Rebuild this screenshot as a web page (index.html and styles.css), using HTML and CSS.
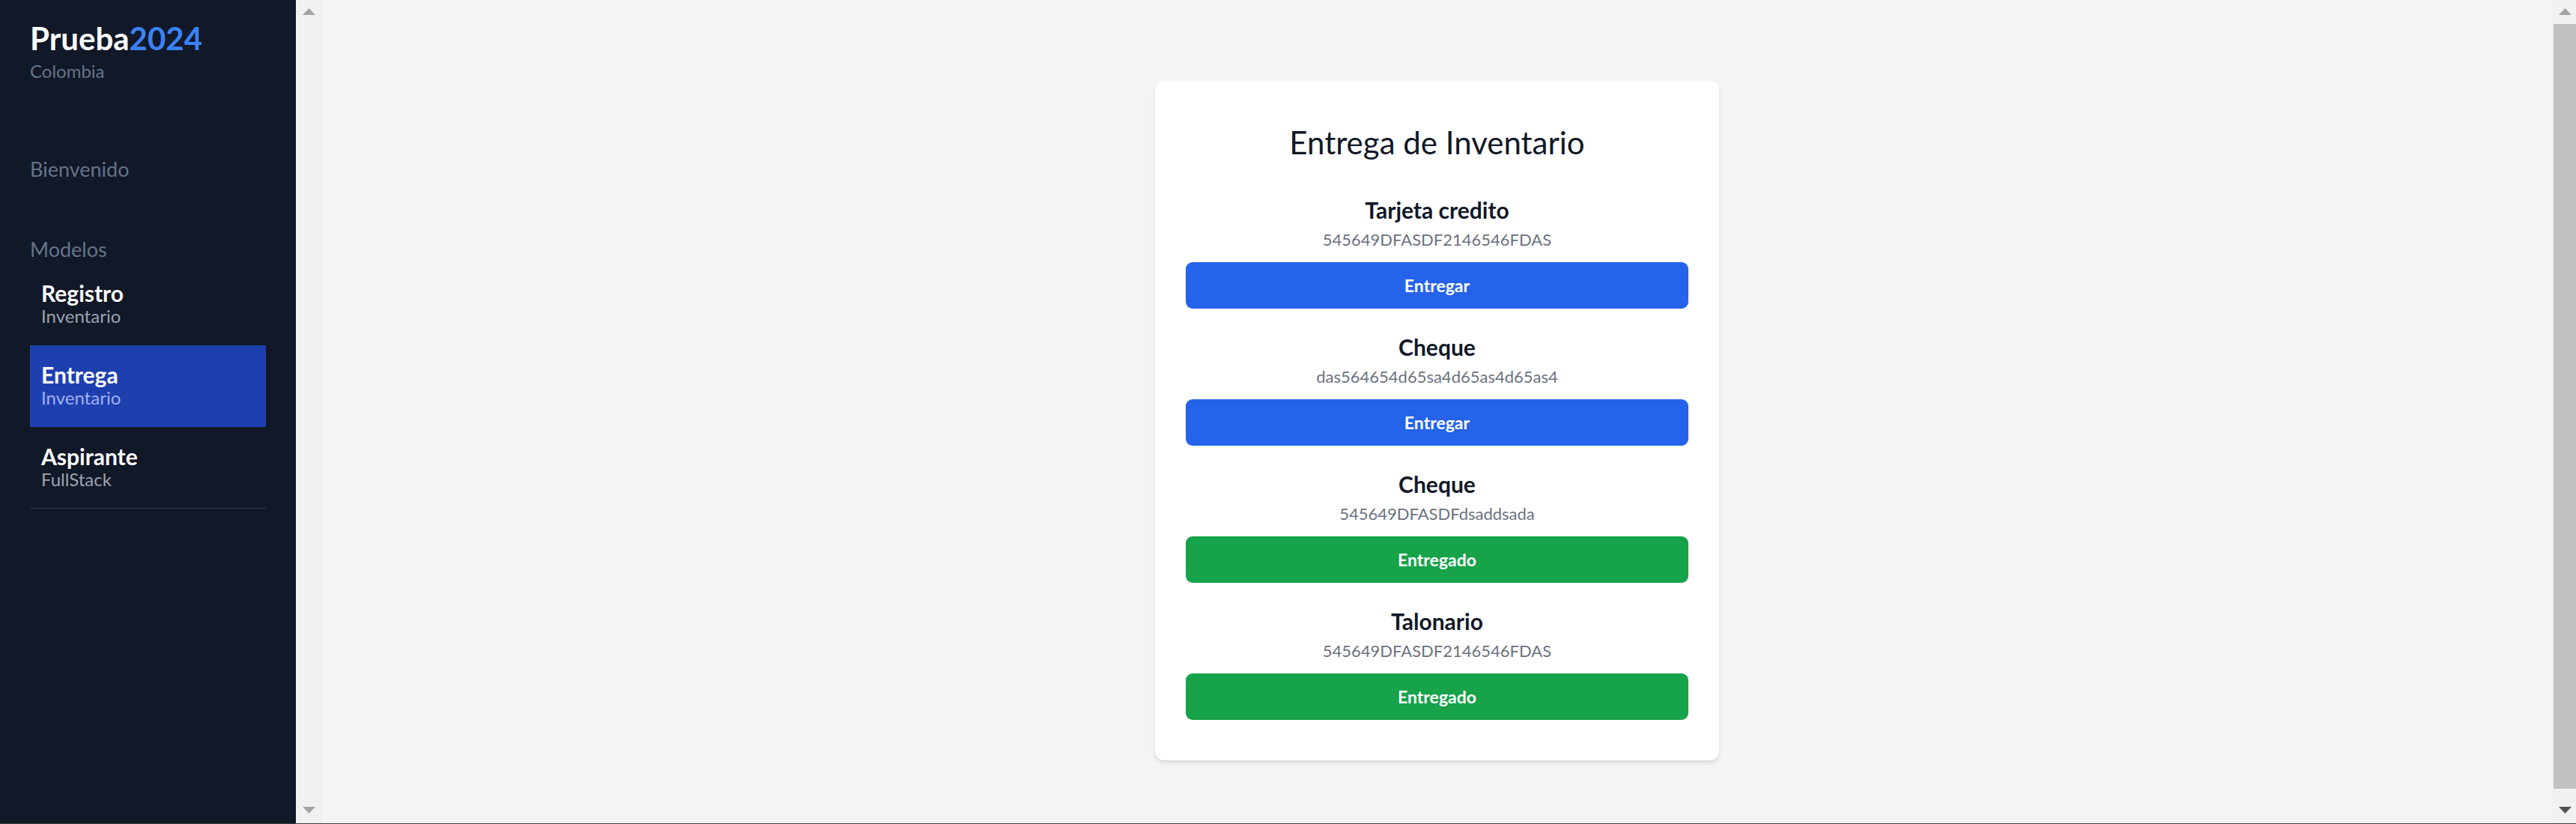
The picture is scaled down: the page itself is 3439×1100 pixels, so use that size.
FILE: index.html
```html
<!DOCTYPE html>
<html lang="es">
<head>
<meta charset="utf-8">
<title>Prueba2024 - Entrega de Inventario</title>
<link rel="stylesheet" href="styles.css">
</head>
<body>
  <aside class="sidebar">
    <div class="brand">Prueba<span class="brand-year">2024</span></div>
    <div class="brand-sub">Colombia</div>
    <div class="nav-label welcome">Bienvenido</div>
    <div class="nav-label models">Modelos</div>
    <nav class="nav">
      <a class="nav-item">
        <span class="nav-title">Registro</span>
        <span class="nav-sub">Inventario</span>
      </a>
      <a class="nav-item active">
        <span class="nav-title">Entrega</span>
        <span class="nav-sub">Inventario</span>
      </a>
      <a class="nav-item last">
        <span class="nav-title">Aspirante</span>
        <span class="nav-sub">FullStack</span>
      </a>
    </nav>
  </aside>
  <div class="scrollbar side-scroll">
    <div class="sb-btn"><svg width="17" height="9" viewBox="0 0 17 9"><polygon points="0,9 8.5,0 17,9" fill="#a3a3a3"/></svg></div>
    <div class="sb-fill"></div>
    <div class="sb-btn down"><svg width="17" height="9" viewBox="0 0 17 9"><polygon points="0,0 17,0 8.5,9" fill="#a3a3a3"/></svg></div>
  </div>
  <main class="content">
    <section class="card">
      <h1 class="card-title">Entrega de Inventario</h1>
      <div class="items">
        <div class="item">
          <div class="item-name">Tarjeta credito</div>
          <div class="item-code">545649DFASDF2146546FDAS</div>
          <button class="btn btn-blue">Entregar</button>
        </div>
        <div class="item">
          <div class="item-name">Cheque</div>
          <div class="item-code">das564654d65sa4d65as4d65as4</div>
          <button class="btn btn-blue">Entregar</button>
        </div>
        <div class="item">
          <div class="item-name">Cheque</div>
          <div class="item-code">545649DFASDFdsaddsada</div>
          <button class="btn btn-green">Entregado</button>
        </div>
        <div class="item">
          <div class="item-name">Talonario</div>
          <div class="item-code">545649DFASDF2146546FDAS</div>
          <button class="btn btn-green">Entregado</button>
        </div>
      </div>
    </section>
  </main>
  <div class="scrollbar page-scroll">
    <div class="sb-btn"><svg width="17" height="9" viewBox="0 0 17 9"><polygon points="0,9 8.5,0 17,9" fill="#a3a3a3"/></svg></div>
    <div class="sb-thumb"></div>
    <div class="sb-fill"></div>
    <div class="sb-btn down"><svg width="17" height="9" viewBox="0 0 17 9"><polygon points="0,0 17,0 8.5,9" fill="#505050"/></svg></div>
  </div>
</body>
</html>
```
FILE: styles.css
```css
* { box-sizing: border-box; }

html, body {
  margin: 0;
  padding: 0;
}

body {
  display: flex;
  height: 1100px;
  overflow: hidden;
  font-family: Lato, "Noto Sans", "Liberation Sans", sans-serif;
  border-bottom: 1px solid #3c3c3c;
  background: #f3f4f6;
}

/* Sidebar */
.sidebar {
  width: 395px;
  flex: none;
  background: #111827;
  padding: 27px 40px 0 40px;
  display: flex;
  flex-direction: column;
}

.brand {
  font-size: 42px;
  line-height: 48px;
  font-weight: 700;
  color: #ffffff;
}

.brand-year { color: #3b82f6; }

.brand-sub {
  margin-top: 6px;
  font-size: 24px;
  line-height: 28px;
  color: #64748b;
}

.nav-label {
  font-size: 27px;
  line-height: 32px;
  color: #64748b;
}

.welcome { margin-top: 101px; }
.models { margin-top: 75px; }

.nav {
  margin-top: 3px;
  display: flex;
  flex-direction: column;
}

.nav-item {
  display: flex;
  flex-direction: column;
  padding: 22px 15px 25px;
  text-decoration: none;
}

.nav-item.active { background: #1e40af; }

.nav-item.last {
  padding-bottom: 24px;
  border-bottom: 1px solid #2d3a4f;
}

.nav-title {
  font-size: 30px;
  line-height: 34px;
  font-weight: 700;
  color: #ffffff;
}

.nav-sub {
  font-size: 24px;
  line-height: 28px;
  color: #9ca3af;
}

.nav-item.active .nav-sub { color: #a3b0f5; }

/* Fake classic scrollbars */
.scrollbar {
  flex: none;
  background: #f1f1f1;
  display: flex;
  flex-direction: column;
}

.side-scroll { width: 35px; }
.page-scroll { width: 32px; }

.sb-btn {
  height: 32px;
  flex: none;
  display: flex;
  align-items: flex-start;
  padding: 11px 0 0 9px;
}

.sb-btn.down {
  align-items: flex-end;
  padding: 0 0 13px 9px;
}

.sb-btn svg { display: block; }

.sb-fill { flex: 1; }

.sb-thumb {
  height: 1021px;
  flex: none;
  margin-left: 2px;
  background: #c1c1c1;
}

/* Content */
.content {
  flex: 1;
  display: flex;
  justify-content: center;
  align-items: flex-start;
  padding-top: 108px;
  background: #f3f4f6;
}

.card {
  width: 753px;
  background: #ffffff;
  border-radius: 12px;
  padding: 54px 41px 54px;
  box-shadow: 0 4px 6px -1px rgba(0,0,0,0.10), 0 2px 4px -2px rgba(0,0,0,0.10);
  text-align: center;
}

.card-title {
  margin: 0 0 44px;
  font-size: 42px;
  line-height: 56px;
  font-weight: 400;
  color: #111827;
}

.items {
  display: flex;
  flex-direction: column;
  gap: 33px;
}

.item {
  display: flex;
  flex-direction: column;
}

.item-name {
  font-size: 30px;
  line-height: 36px;
  font-weight: 700;
  color: #111827;
}

.item-code {
  margin-top: 8px;
  font-size: 22px;
  line-height: 28px;
  color: #6b7280;
}

.btn {
  margin-top: 16px;
  height: 62px;
  border: 0;
  border-radius: 9px;
  font-family: inherit;
  font-size: 23px;
  font-weight: 700;
  color: #ffffff;
  cursor: pointer;
}

.btn-blue { background: #2563eb; }
.btn-green { background: #16a34a; }
```
